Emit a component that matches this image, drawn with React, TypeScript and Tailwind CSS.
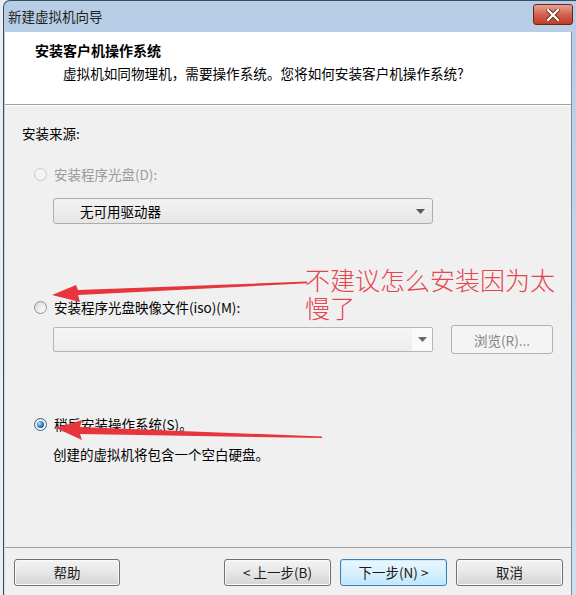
import React from "react";

const font = { fontFamily: '"Noto Sans CJK SC", "Noto Sans", sans-serif' };

const Radio = ({ state }: { state: "disabled" | "off" | "on" }) => {
  if (state === "disabled") {
    return <span className="w-[13px] h-[13px] rounded-full border border-[#c9c9c9] bg-[#f4f4f4] shrink-0" />;
  }
  if (state === "off") {
    return (
      <span className="w-[13px] h-[13px] rounded-full border border-[#8e8f8f] bg-gradient-to-br from-[#d8d8d8] to-[#ffffff] shrink-0 flex items-center justify-center">
        <span className="w-[7px] h-[7px] rounded-full bg-gradient-to-br from-[#e0e0e0] to-[#f8f8f8]" />
      </span>
    );
  }
  return (
    <span className="w-[13px] h-[13px] rounded-full border border-[#2c628b] bg-gradient-to-br from-[#e6e6e6] to-[#ffffff] shrink-0 flex items-center justify-center">
      <span className="w-[7px] h-[7px] rounded-full bg-[radial-gradient(circle_at_35%_35%,#a8e2ff,#1f6fb0_60%,#0d3f6e)]" />
    </span>
  );
};

const Caret = ({ color = "#5a5a5a" }: { color?: string }) => (
  <svg width="9" height="5" viewBox="0 0 9 5">
    <polygon points="0,0 9,0 4.5,5" fill={color} />
  </svg>
);

const Btn = ({ label, primary, w = "w-[107px]" }: { label: string; primary?: boolean; w?: string }) => (
  <button
    className={
      w +
      " h-[27px] rounded-[3px] border text-[13.5px] text-[#1a1a1a] whitespace-pre flex items-center justify-center " +
      (primary
        ? "border-[#3c7fb1] bg-gradient-to-b from-[#eaf6fd] via-[#d9f0fc] to-[#bee6fd] shadow-[inset_0_0_0_1px_#c9ecfd]"
        : "border-[#707070] bg-gradient-to-b from-[#f4f4f4] via-[#e6e6e6] to-[#d4d4d4] shadow-[inset_0_0_0_1px_#fbfbfb]")
    }
  >
    {label}
  </button>
);

export default function App() {
  return (
    <div className="relative w-[576px] h-[595px] overflow-hidden bg-[#e9eef3]" style={font}>
      <div className="ml-[3px] w-[580px] h-[600px] border-l border-t border-[#3c4a58] rounded-tl-[7px] bg-gradient-to-b from-[#b7cde6] via-[#c3d7ec] to-[#cfe0f1] flex flex-col">
        {/* Title bar */}
        <div className="h-[31px] flex items-center justify-between pl-[4px] pr-[10px] shrink-0">
          <span className="text-[13.5px] text-[#1e1e1e] leading-none">新建虚拟机向导</span>
          <div className="w-[40px] h-[21px] rounded-[3px] border border-[#6b2418] bg-gradient-to-b from-[#e8a493] via-[#d26150] to-[#c43a22] flex items-center justify-center mt-[-4px]">
            <svg width="14" height="12" viewBox="0 0 14 12">
              <path d="M2 1 L12 11 M12 1 L2 11" stroke="#5a1a10" strokeWidth="4" strokeLinecap="square" />
              <path d="M2 1 L12 11 M12 1 L2 11" stroke="#ffffff" strokeWidth="2.4" strokeLinecap="square" />
            </svg>
          </div>
        </div>

        {/* Client area */}
        <div className="ml-[1px] w-[567px] flex-1 flex flex-col border-r border-[#7a8a9a]">
          {/* Header */}
          <div className="h-[73px] bg-white border-b border-[#a0a0a0] pt-[9px] pl-[30px] shrink-0">
            <div className="text-[14px] font-bold leading-[18px] text-[#000]">安装客户机操作系统</div>
            <div className="mt-[5px] pl-[28px] text-[13.6px] leading-[18px] text-[#000]">
              虚拟机如同物理机，需要操作系统。您将如何安装客户机操作系统?
            </div>
          </div>

          {/* Body */}
          <div className="flex-1 bg-[#f0f0f0] border-t border-white flex flex-col">
            <div className="h-[441px] pl-[17px] flex flex-col text-[13.5px] leading-[18px] text-[#000]">
              <div className="mt-[18px]">安装来源:</div>

              <div className="mt-[23px] flex items-center gap-[7px] pl-[12px] text-[#9a9a9a]">
                <Radio state="disabled" />
                <span>安装程序光盘(D):</span>
              </div>
              <div className="mt-[15px] ml-[31px] w-[380px] h-[26px] rounded-[3px] border border-[#adadad] bg-gradient-to-b from-[#f2f2f2] to-[#e6e6e6] flex items-center justify-between pl-[26px] pr-[7px]">
                <span>无可用驱动器</span>
                <Caret />
              </div>

              <div className="mt-[74px] flex items-center gap-[7px] pl-[12px]">
                <Radio state="off" />
                <span>安装程序光盘映像文件(iso)(M):</span>
              </div>
              <div className="mt-[9px] ml-[31px] flex items-center gap-[18px]">
                <div className="w-[380px] h-[25px] border border-[#b5b5b5] rounded-[2px] bg-gradient-to-b from-[#f6f6f6] to-[#ececec] flex items-center justify-end">
                  <div className="w-[20px] h-full bg-[#fafafa] flex items-center justify-center">
                    <Caret color="#6a6a6a" />
                  </div>
                </div>
                <div className="w-[102px] h-[29px] rounded-[3px] border border-[#adb2b5] bg-[#f4f4f4] text-[#838383] flex items-center justify-center">
                  浏览(R)...
                </div>
              </div>

              <div className="mt-[61px] flex items-center gap-[7px] pl-[12px]">
                <Radio state="on" />
                <span>稍后安装操作系统(S)。</span>
              </div>
              <div className="mt-[12px] pl-[31px]">创建的虚拟机将包含一个空白硬盘。</div>
            </div>

            <div className="border-t border-[#a0a0a0] h-[1px] bg-white" />

            <div className="pt-[11px] pl-[9px] flex items-center">
              <Btn label="帮助" w="w-[106px]" />
              <div className="ml-[104px] flex gap-[9px]">
                <Btn label="< 上一步(B)" />
                <Btn label="下一步(N) >" primary />
                <Btn label="取消" />
              </div>
            </div>
          </div>
        </div>
      </div>

      {/* Red annotation */}
      <div className="absolute left-[305px] top-[265px] w-[262px] text-[25px] leading-[28px] font-light text-[#e6444e]">
        不建议怎么安装因为太慢了
      </div>
      <svg className="absolute left-0 top-0 pointer-events-none" width="576" height="595" viewBox="0 0 576 595">
        <polygon points="307,281.5 307,283.3 78,295 80,302 52,295 76,285 78,290" fill="#e8343c" />
        <polygon points="322,436.5 322,438 80,434 82,440 56,428 82,420 80,427" fill="#e8343c" />
      </svg>
    </div>
  );
}
